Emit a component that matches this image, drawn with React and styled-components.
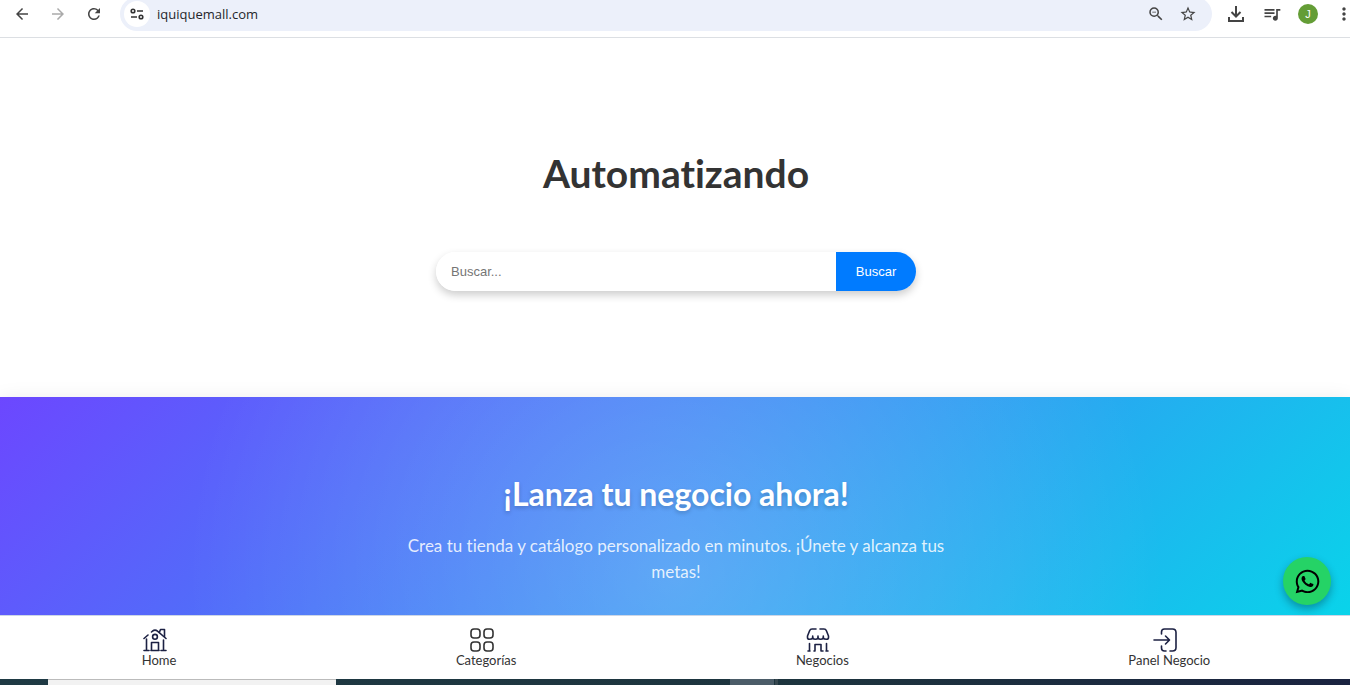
import React, { useState } from "react"
import styled, { createGlobalStyle } from "styled-components"
import {
  MdArrowBack,
  MdArrowForward,
  MdRefresh,
  MdZoomOut,
  MdStarBorder,
  MdQueueMusic,
  MdMoreVert,
} from "react-icons/md"
import { FaWhatsapp } from "react-icons/fa"

const GlobalStyle = createGlobalStyle`
  * {
    box-sizing: border-box;
  }
  body {
    margin: 0;
    background-color: #fff;
    font-family: Lato, "Liberation Sans", sans-serif;
    font-variant-ligatures: none;
    color: #333;
  }
  h1, h2, p {
    margin: 0;
  }
`

const Screen = styled.div`
  height: 100vh;
  display: flex;
  flex-direction: column;
  overflow: hidden;
`

const BrowserBar = styled.header`
  flex: none;
  height: 38px;
  display: flex;
  align-items: flex-start;
  padding-left: 8px;
  margin-right: -6px;
  border-bottom: 1px solid #dcdfe3;
  overflow: hidden;
`

const IconButton = styled.button`
  flex: none;
  width: ${(props) => props.$width || 36}px;
  height: 28px;
  display: flex;
  align-items: center;
  justify-content: center;
  padding: 0;
  border: none;
  background: none;
  font-size: ${(props) => props.$size || 18}px;
  color: ${(props) => (props.$muted ? "#aaa" : "#444")};
  cursor: pointer;
`

const AddressBar = styled.div`
  flex: 1;
  height: 34px;
  display: flex;
  align-items: flex-start;
  margin: -3px 0 0 12px;
  padding: 3px 8px 0 4px;
  border-radius: 17px;
  background-color: #ecf0fa;
`

const SiteInfo = styled.button`
  flex: none;
  width: 26px;
  height: 26px;
  display: flex;
  align-items: center;
  justify-content: center;
  margin-top: 1px;
  padding: 0;
  border: none;
  border-radius: 50%;
  background-color: #fff;
`

const AddressInput = styled.input`
  flex: 1;
  min-width: 0;
  height: 28px;
  padding: 0 7px;
  border: none;
  outline: none;
  background: none;
  font-family: "Open Sans", "Noto Sans", sans-serif;
  font-size: 13px;
  color: #24262b;
`

const Avatar = styled.span`
  width: 20px;
  height: 20px;
  border-radius: 50%;
  background-color: #649d36;
  color: #fff;
  font-family: "Liberation Sans", sans-serif;
  font-size: 11px;
  line-height: 20px;
  text-align: center;
`

const Page = styled.main`
  flex: 1;
  min-height: 0;
  overflow: hidden;
`

const Hero = styled.section`
  display: flex;
  flex-direction: column;
  align-items: center;
  gap: 56px;
  padding: 112px 20px 106px 22px;
`

const HeroTitle = styled.h1`
  font-size: 39px;
  line-height: 46px;
  font-weight: 700;
`

const SearchForm = styled.form`
  width: 100%;
  max-width: 480px;
  height: 39px;
  display: flex;
  border-radius: 20px;
  box-shadow: 0 4px 8px rgba(0, 0, 0, 0.2);
  overflow: hidden;
`

const SearchInput = styled.input`
  flex: 1;
  min-width: 0;
  padding: 0 15px;
  border: none;
  outline: none;
  background-color: #fff;
  font-family: "Liberation Sans", sans-serif;
  font-size: 13px;
  &::placeholder {
    color: #757575;
  }
`

const SearchBtn = styled.button`
  width: 80px;
  padding: 0;
  border: none;
  background-color: #007bff;
  color: #fff;
  font-family: "Liberation Sans", sans-serif;
  font-size: 13px;
  cursor: pointer;
`

const Banner = styled.section`
  min-height: 360px;
  display: flex;
  flex-direction: column;
  align-items: center;
  gap: 18px;
  padding: 76px 20px 76px 22px;
  background: radial-gradient(
      circle at center,
      rgba(255, 255, 255, 0.2),
      rgba(255, 255, 255, 0) 70%
    ),
    linear-gradient(135deg, #6c47ff, #00e0e8);
  box-shadow: 0 4px 20px rgba(0, 0, 0, 0.1);
  text-align: center;
`

const BannerTitle = styled.h2`
  font-size: 32px;
  line-height: 42px;
  font-weight: 700;
  color: #fff;
  text-shadow: 0 2px 4px rgba(0, 0, 0, 0.2);
`

const BannerText = styled.p`
  max-width: 560px;
  font-size: 17px;
  line-height: 26px;
  color: rgba(255, 255, 255, 0.85);
`

const BottomNav = styled.nav`
  flex: none;
  height: 64px;
  display: flex;
  justify-content: space-around;
  align-items: flex-start;
  padding: 12px 0 0 2px;
  border-top: 1px solid #ccd6e6;
  background-color: #fff;
`

const NavLink = styled.a`
  display: flex;
  flex-direction: column;
  align-items: center;
  font-size: 13px;
  line-height: 16px;
  color: #333;
  text-decoration: none;
  svg {
    margin-right: 8px;
  }
`

const NavIcon = styled.svg`
  width: 24px;
  height: 24px;
  fill: none;
  stroke: ${(props) => props.$color || "#1c2143"};
  stroke-width: 1.6;
  stroke-linecap: round;
  stroke-linejoin: round;
`

const WhatsappLink = styled.a`
  position: fixed;
  right: 19px;
  bottom: 80px;
  width: 48px;
  height: 48px;
  display: flex;
  align-items: center;
  justify-content: center;
  border-radius: 50%;
  background-color: #25d366;
  box-shadow: 0 4px 8px rgba(0, 0, 0, 0.3);
  font-size: 27px;
  color: #000;
`

const Taskbar = styled.footer`
  flex: none;
  height: 6px;
  display: flex;
  background: linear-gradient(90deg, #1f3a44, #1d343e 60%, #1a2340);
`

const TaskItem = styled.div`
  width: ${(props) => props.$width}px;
  margin-left: ${(props) => props.$gap}px;
  background-color: ${(props) => props.$color};
  border-top: 1px solid ${(props) => props.$edge};
`

function TuneIcon() {
  return (
    <svg width="14" height="14" viewBox="0 0 14 14" fill="none" stroke="#333" strokeWidth="1.6">
      <circle cx="3" cy="4" r="1.8" />
      <path d="M7 4h6M1 10h6" />
      <circle cx="11" cy="10" r="1.8" />
    </svg>
  )
}

function DownloadIcon() {
  return (
    <svg width="18" height="18" viewBox="0 0 18 18" fill="none" stroke="#444" strokeWidth="2">
      <path d="M9 1v10M4.5 7L9 11.5 13.5 7M2 12v4h14v-4" />
    </svg>
  )
}

function HomeIcon() {
  return (
    <NavIcon viewBox="0 0 24 24">
      <path d="M1 10.5L5 7M8.5 4L9.5 3.2a3.7 3.7 0 0 1 5 0L23 10.5" />
      <path d="M16.5 4l1-2.5h4v7" />
      <path d="M3.5 11v11.5M20.5 12v10.5M1 22.5h5M8 22.5h8M18 22.5h5" />
      <circle cx="12" cy="8.8" r="2.4" />
      <path d="M8.5 22v-7.500h7V22" />
    </NavIcon>
  )
}

function CategoriesIcon() {
  return (
    <NavIcon viewBox="0 0 24 24" $color="#333">
      <rect x="1" y="1" width="9" height="9" rx="3" />
      <rect x="14" y="1" width="9" height="9" rx="3" />
      <rect x="1" y="14" width="9" height="9" rx="3" />
      <rect x="14" y="14" width="9" height="9" rx="3" />
    </NavIcon>
  )
}

function StoreIcon() {
  return (
    <NavIcon viewBox="0 0 24 24">
      <path d="M10 1H6Q4.3 1 3.6 2.8L1.5 8v1.5q0 1.8 2 1.8 2.4 0 3.2-1.3.8 1.3 2.7 1.3T12 10q.8 1.3 2.6 1.3t2.7-1.3q.8 1.3 3.2 1.3 2 0 2-1.8V8L20.4 2.8Q19.7 1 18 1h-4" />
      <path d="M6.7 8v2M12 8v2M17.3 8v2" />
      <path d="M3.5 15.5V23M20.5 15.5V23M2 23h2M20 23h2" />
      <path d="M9 22.5V16.5h6v6M8 23h1M15 23h2" />
    </NavIcon>
  )
}

function PanelIcon() {
  return (
    <NavIcon viewBox="0 0 24 24">
      <path d="M8.5 6V4q0-3 3-3h8q3.500 0 3.500 3.500v15Q23 23 19.500 23H17M13 23h-1.500q-3 0-3-3v-2" />
      <path d="M1 12h15M12.5 8L16.5 12l-4 4" />
    </NavIcon>
  )
}

const links = [
  { label: "Home", Icon: HomeIcon },
  { label: "Categorías", Icon: CategoriesIcon },
  { label: "Negocios", Icon: StoreIcon },
  { label: "Panel Negocio", Icon: PanelIcon },
]

function Browser() {
  const [url, setUrl] = useState("iquiquemall.com")

  return (
    <BrowserBar>
      <IconButton $width={28} aria-label="Atrás">
        <MdArrowBack />
      </IconButton>
      <IconButton $width={44} $muted aria-label="Adelante">
        <MdArrowForward />
      </IconButton>
      <IconButton $width={28} aria-label="Recargar">
        <MdRefresh />
      </IconButton>
      <AddressBar>
        <SiteInfo aria-label="Información del sitio">
          <TuneIcon />
        </SiteInfo>
        <AddressInput
          aria-label="Dirección"
          value={url}
          onChange={(e) => setUrl(e.target.value)}
        />
        <IconButton $width={32} aria-label="Zoom">
          <MdZoomOut />
        </IconButton>
        <IconButton $width={32} aria-label="Favoritos">
          <MdStarBorder />
        </IconButton>
      </AddressBar>
      <IconButton $width={48} aria-label="Descargas">
        <DownloadIcon />
      </IconButton>
      <IconButton $width={24} $size={20} aria-label="Multimedia">
        <MdQueueMusic />
      </IconButton>
      <IconButton $width={48} aria-label="Perfil">
        <Avatar>J</Avatar>
      </IconButton>
      <IconButton $width={24} $size={20} aria-label="Menú">
        <MdMoreVert />
      </IconButton>
    </BrowserBar>
  )
}

function App() {
  const [search, setSearch] = useState("")

  const handleSubmit = (e) => {
    e.preventDefault()
    setSearch("")
  }

  return (
    <>
      <GlobalStyle />
      <Screen>
        <Browser />
        <Page>
          <Hero>
            <HeroTitle>Automatizando</HeroTitle>
            <SearchForm onSubmit={handleSubmit}>
              <SearchInput
                aria-label="Buscar"
                placeholder="Buscar..."
                value={search}
                onChange={(e) => setSearch(e.target.value)}
              />
              <SearchBtn type="submit">Buscar</SearchBtn>
            </SearchForm>
          </Hero>
          <Banner>
            <BannerTitle>¡Lanza tu negocio ahora!</BannerTitle>
            <BannerText>
              Crea tu tienda y catálogo personalizado en minutos. ¡Únete y
              alcanza tus metas!
            </BannerText>
          </Banner>
        </Page>
        <BottomNav>
          {links.map(({ label, Icon }) => (
            <NavLink key={label} href="#">
              <Icon />
              {label}
            </NavLink>
          ))}
        </BottomNav>
        <Taskbar>
          <TaskItem $width={288} $gap={48} $color="#f2f2f2" $edge="#bbb" />
          <TaskItem $width={44} $gap={394} $color="#4b5c68" $edge="#4b5c68" />
          <TaskItem $width={3} $gap={1} $color="#36474f" $edge="#36474f" />
        </Taskbar>
      </Screen>
      <WhatsappLink href="#" aria-label="WhatsApp">
        <FaWhatsapp />
      </WhatsappLink>
    </>
  )
}

export default App
